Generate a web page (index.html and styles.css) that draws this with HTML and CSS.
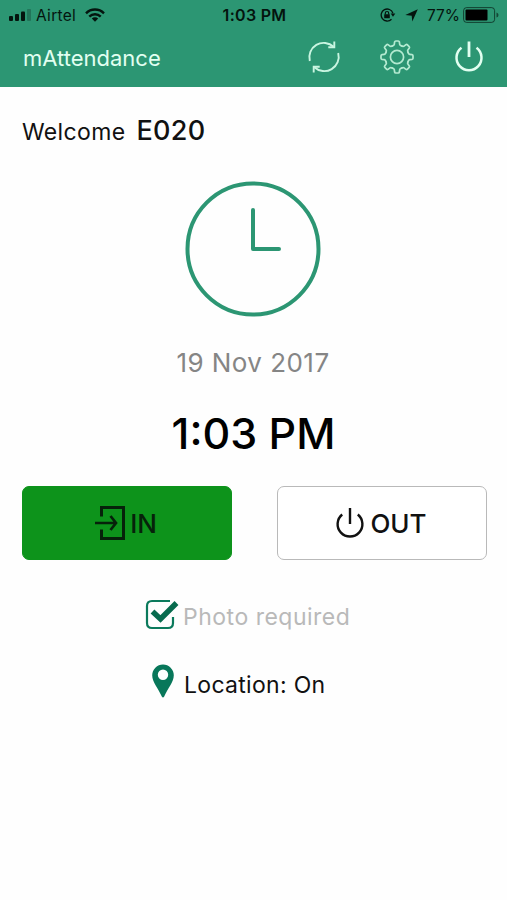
FILE: index.html
```
<!DOCTYPE html>
<html lang="en">
<head>
<meta charset="utf-8">
<title>mAttendance</title>
<link rel="stylesheet" href="styles.css">
</head>
<body>
<header class="header">
  <div class="status">
    <div class="status-side">
      <svg class="signal" width="24" height="12" viewBox="0 0 24 12"><rect x="0" y="7" width="4" height="5" rx="1"/><rect x="6" y="5" width="4" height="7" rx="1"/><rect x="12" y="2.500" width="4" height="9.500" rx="1"/><rect x="18" y="0" width="4" height="12" rx="1" opacity=".25"/></svg>
      <span class="carrier">Airtel</span>
      <svg class="wifi" width="20" height="14" viewBox="0 0 20 14"><g fill="none" stroke="#04140e" stroke-width="2.400"><path d="M1 5.300a12.700 12.700 0 0 1 18 0"/><path d="M4.300 8.700a8 8 0 0 1 11.400 0"/></g><path d="M10 13.700 6.800 10.600a4.500 4.500 0 0 1 6.400 0z"/></svg>
    </div>
    <span class="clock-time">1:03 PM</span>
    <div class="status-side status-right">
      <svg class="lock" width="16" height="14" viewBox="0 0 16 14"><path d="M12.900 5.200A6 6 0 1 0 11.500 11.200" fill="none" stroke="#04140e" stroke-width="1.300"/><path d="M10.700 5.500h4.600L13 8.700z"/><rect x="4.200" y="6.300" width="5.600" height="4" rx=".5"/><path d="M5.300 6.500V5.200a1.700 1.700 0 0 1 3.400 0v1.300" fill="none" stroke="#04140e" stroke-width="1.200"/></svg>
      <svg class="arrow" width="13" height="13" viewBox="0 0 13 13"><path d="M12.800.2 7.300 12.500 6.700 6.700.3 6z"/></svg>
      <span class="percent">77%</span>
      <svg class="battery" width="37" height="16" viewBox="0 0 37 16"><rect x=".6" y=".6" width="31" height="14.800" rx="3" fill="none" stroke="#04140e" stroke-width="1" opacity=".65"/><rect x="2.500" y="2.500" width="22" height="11" rx="1" fill="#000"/><path d="M33.500 5.500q2 .5 2 2.500t-2 2.500z" opacity=".6"/></svg>
    </div>
  </div>
  <div class="bar">
    <h1 class="title">mAttendance</h1>
    <svg class="bar-icon" width="34" height="36" viewBox="-17 -18 34 36"><g fill="none" stroke="#c9f5e1" stroke-width="1.900"><path d="M-14.200 4A14.400 14.400 0 0 1 9.600-10.200"/><path d="M14.200-4A14.400 14.400 0 0 1-9.600 10.200"/><path d="M10.300-15.500v5.800H4.300M-10.300 15.500V9.700h6"/></g></svg>
    <svg class="bar-icon" width="36" height="36" viewBox="-18 -18 36 36"><defs><path id="tooth" d="M-4.600-11.100-3.700-11.500Q-2.800-11.900-2.700-12.700L-2.400-15Q-2.200-16-1.200-16H1.200Q2.200-16 2.400-15L2.700-12.700Q2.800-11.900 3.700-11.500L4.600-11.100"/></defs><g fill="none" stroke="#b4ead1" stroke-width="1.700" stroke-linecap="round"><circle r="6.600"/><use href="#tooth"/><use href="#tooth" transform="rotate(45)"/><use href="#tooth" transform="rotate(90)"/><use href="#tooth" transform="rotate(135)"/><use href="#tooth" transform="rotate(180)"/><use href="#tooth" transform="rotate(225)"/><use href="#tooth" transform="rotate(270)"/><use href="#tooth" transform="rotate(315)"/></g></svg>
    <svg class="bar-icon" width="32" height="36" viewBox="-16 -18 32 36"><g fill="none" stroke="#e2fff1" stroke-width="2.500"><path d="M-7.500-9.300A12.500 12.500 0 1 0 7.500-9.300"/><path d="M0-15.500V0" stroke-width="2.800"/></g></svg>
  </div>
</header>
<main class="main">
  <p class="welcome"><span class="greeting">Welcome</span><strong class="user">E020</strong></p>
  <svg class="clock" width="136" height="136" viewBox="0 0 136 136"><g fill="none" stroke="#2c9673" stroke-width="4"><circle cx="68" cy="68" r="65.500"/><path d="M68 29V68H94" stroke-linecap="round" stroke-linejoin="round"/></g></svg>
  <p class="date">19 Nov 2017</p>
  <p class="time">1:03 PM</p>
  <div class="actions">
    <button class="btn btn-in"><svg width="32" height="36" viewBox="0 0 32 36"><g fill="none" stroke="#06220a" stroke-width="3"><path d="M6.500 11.500V2.500H28.500V33.500H6.500V24.500"/><path d="M0 18H20.500M15.500 11 21 18 15.500 25" stroke-width="2.700"/></g></svg><span class="in-text">IN</span></button>
    <button class="btn btn-out"><svg width="30" height="36" viewBox="-15 -19 30 36"><g fill="none" stroke="#111" stroke-width="2.400"><path d="M-7.800-9.500A12.400 12.400 0 1 0 7.800-9.500"/><path d="M0-16V0"/></g></svg><span class="out-text">OUT</span></button>
  </div>
  <div class="option option-photo">
    <svg width="36" height="32" viewBox="0 0 36 32"><path d="M25 2H7Q2 2 2 7V24Q2 29 7 29H23Q28 29 28 24V18" fill="none" stroke="#0b7a5c" stroke-width="2.200"/><path d="M7.500 12.500 15.500 20 31.500 4" fill="none" stroke="#086b4e" stroke-width="5.500"/></svg>
    <span class="photo-text">Photo required</span>
  </div>
  <div class="option option-location">
    <svg width="24" height="34" viewBox="0 0 24 34"><path fill="#08775a" fill-rule="evenodd" d="M12 .5A10.800 10.800 0 0 0 1.200 11.300C1.200 18 7 24 10.800 32.500Q12 34.500 13.200 32.500C17 24 22.800 18 22.800 11.300A10.800 10.800 0 0 0 12 .5ZM12 5.600a5.200 5.200 0 1 1 0 10.400 5.200 5.200 0 0 1 0-10.400Z"/></svg>
    <span class="location-text">Location: On</span>
  </div>
</main>
</body>
</html>
```
FILE: styles.css
```
* { box-sizing: border-box; }
body {
  margin: 0;
  background: #fefefe;
  color: #111;
  font-family: Inter, "Liberation Sans", sans-serif;
}
p, h1 { margin: 0; }
svg { display: block; flex: none; }
span, strong, p, h1 { white-space: nowrap; }
.header {
  height: 87px;
  background: #2c9673;
}
.status {
  display: flex;
  align-items: center;
  height: 30px;
  padding: 0 7px 0 9px;
  color: #04140e;
  font-size: 15.5px;
}
.status svg { fill: #04140e; }
.status-side { display: flex; flex: 1; align-items: center; }
.status-right { justify-content: flex-end; }
.carrier { margin-left: 3px; letter-spacing: .3px; }
.wifi { margin-left: 9px; }
.clock-time { font-weight: 600; font-size: 16px; letter-spacing: .3px; }
.arrow { margin-left: 9px; }
.percent { margin: 0 3px 0 9px; }
.bar {
  display: flex;
  align-items: center;
  height: 54px;
  padding: 0 22px 0 23px;
}
.title {
  flex: 1;
  padding-top: 2px;
  color: #e2fff1;
  font-size: 22px;
  font-weight: 400;
}
.bar-icon + .bar-icon { margin-left: 38px; }
.main { padding: 0 20px 0 22px; }
.welcome {
  display: flex;
  align-items: baseline;
  height: 94px;
  padding-top: 27px;
}
.greeting { font-size: 23px; letter-spacing: .35px; }
.user {
  margin-left: 11px;
  font-size: 27px;
  font-weight: 500;
  letter-spacing: .3px;
}
.clock { margin: 0 auto 0 163px; }
.date {
  margin-top: 29px;
  padding-right: 3px;
  color: #858585;
  font-size: 26px;
  letter-spacing: .45px;
  line-height: 34px;
  text-align: center;
}
.time {
  margin-top: 25px;
  padding-right: 2px;
  color: #000;
  font-size: 43px;
  font-weight: 500;
  line-height: 56px;
  text-align: center;
}
.actions {
  display: grid;
  grid-template-columns: 1fr 1fr;
  gap: 45px;
  margin-top: 25px;
}
.btn {
  display: flex;
  align-items: center;
  justify-content: center;
  height: 74px;
  padding: 0 2px 0 0;
  border: 1.5px solid #b9b9b9;
  border-radius: 7px;
  background: #fff;
  color: #111;
  font-family: inherit;
  font-size: 26px;
  font-weight: 500;
}
.btn-in { border-color: #0d931b; background: #0d931b; color: #06220a; }
.in-text { margin-left: 3px; }
.out-text { margin-left: 5px; }
.option { display: flex; align-items: center; }
.option-photo {
  margin: 39px 0 0 123px;
  color: #b9b9b9;
  font-size: 23px;
  letter-spacing: .5px;
}
.option-location {
  margin: 32px 0 0 129px;
  font-size: 23px;
  letter-spacing: .3px;
}
.photo-text { margin: 3px 0 0 2px; }
.location-text { margin: 8px 0 0 9px; }
```
